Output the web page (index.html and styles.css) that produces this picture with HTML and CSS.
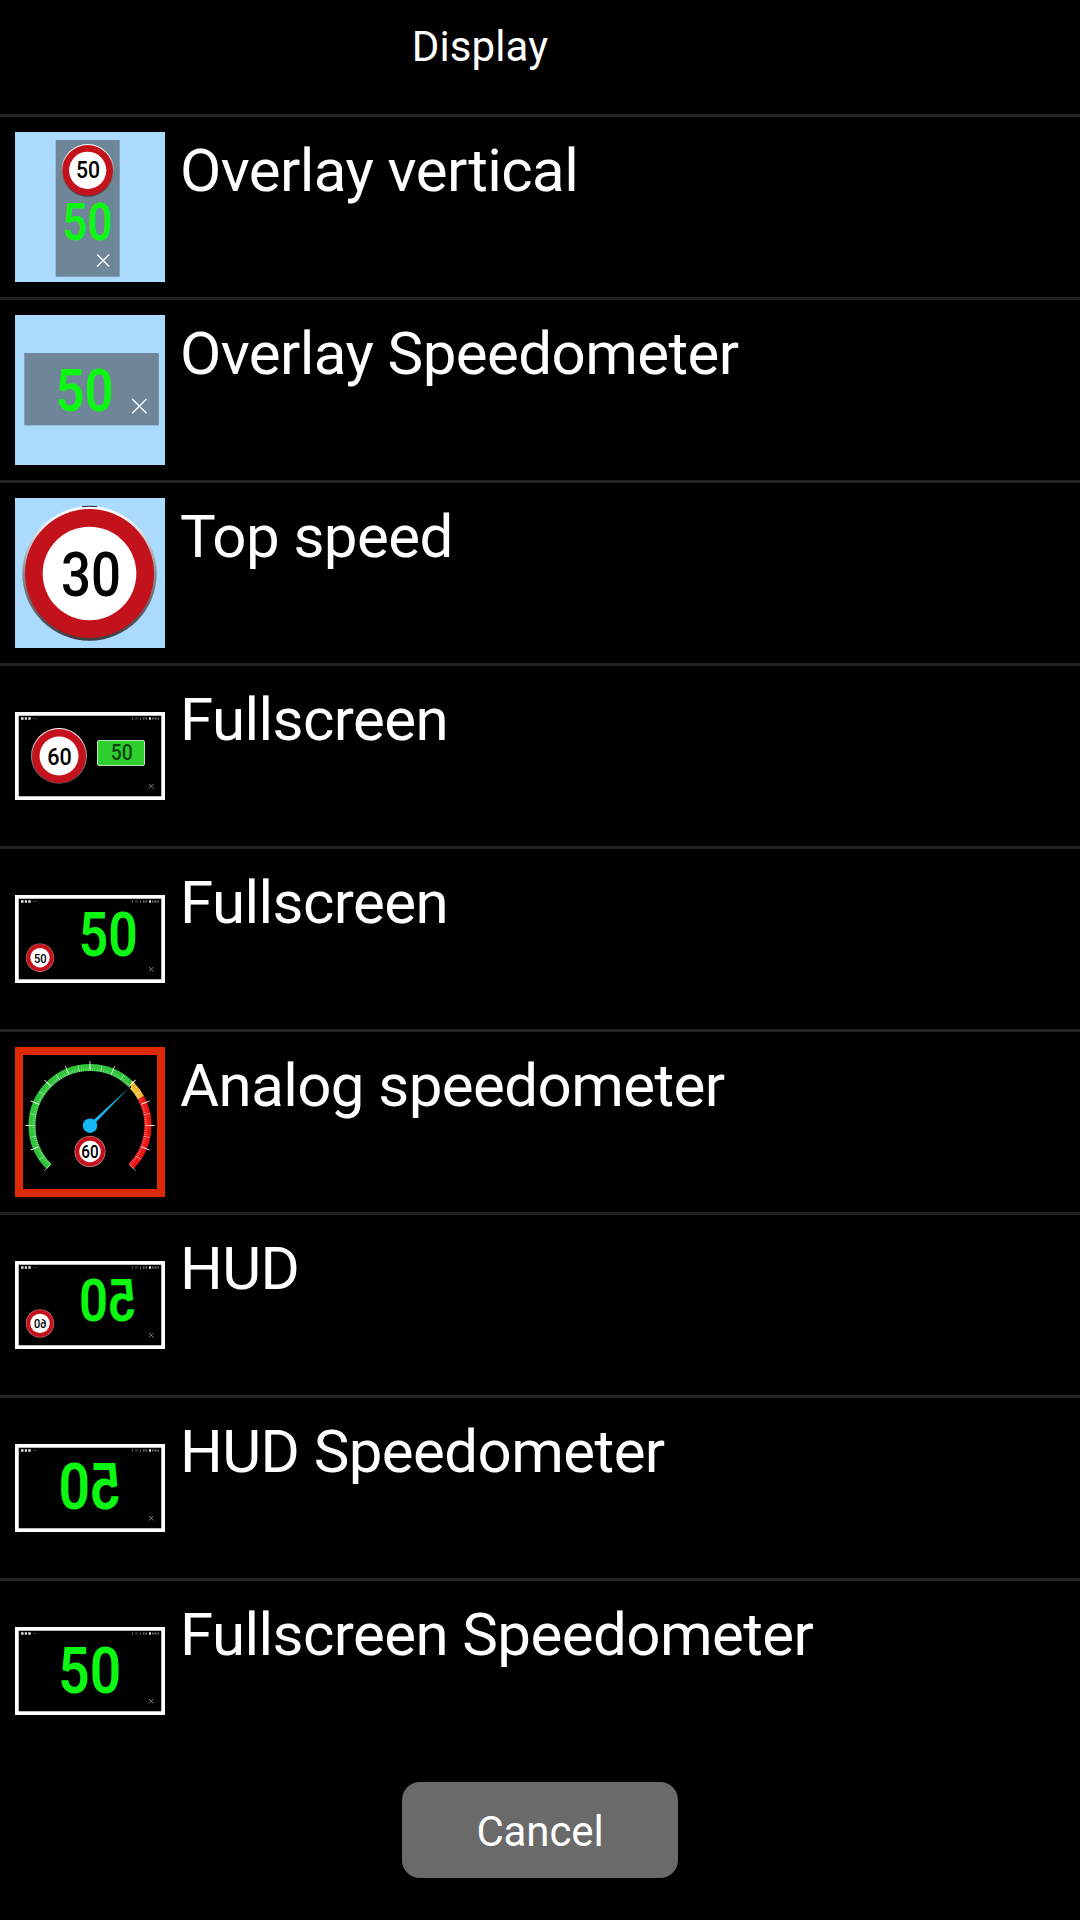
FILE: index.html
```html
<!DOCTYPE html>
<html lang="en">
<head>
    <meta charset="UTF-8">
    <meta name="viewport" content="width=device-width, initial-scale=1.0">
    <title>Display</title>
    <link rel="stylesheet" href="styles.css">
</head>
<body>
    <!-- Shared thumbnail parts -->
    <svg class="defs" width="0" height="0">
        <defs>
            <linearGradient id="rim" x1="0" y1="0" x2="0" y2="1">
                <stop offset="0" stop-color="#ffffff"/>
                <stop offset="0.12" stop-color="#f0f0f0"/>
                <stop offset="0.5" stop-color="#8c8a8c"/>
                <stop offset="1" stop-color="#3c3c40"/>
            </linearGradient>
            <g id="screen">
                <rect width="150" height="88" fill="#fff"/>
                <rect x="3.5" y="3.5" width="143" height="81" fill="#777"/>
                <rect x="4" y="4" width="142" height="80" fill="#000"/>
                <path d="M6 6.500h2.600M9.800 6.500h2.200M13.200 6.500h2.600" stroke="#ddd" stroke-width="2.400"/>
                <path d="M18 6.500h4" stroke="#333" stroke-width="1"/>
                <path d="M117 6.500h1.500M120.500 6.500h2M125 6.800h1.500M128 6.500h4.500M137 6.500h7" stroke="#777" stroke-width="2" stroke-dasharray="1 .5"/>
                <path d="M134 6.500h2" stroke="#ddd" stroke-width="2.600"/>
                <path d="M134 72l4.500 4.500M138.500 72l-4.500 4.500" stroke="#999" stroke-width=".8"/>
            </g>
        </defs>
    </svg>

    <header class="header">Display</header>

    <!-- Display modes -->
    <ul class="list">
        <li class="item">
            <svg class="thumb" viewBox="0 0 150 150">
                <rect class="sky" width="150" height="150"/>
                <rect class="overlay" x="40.700" y="8" width="64" height="136.700"/>
                <circle cx="72.700" cy="38.300" r="26.400" fill="url(#rim)"/>
                <circle class="ring" cx="72.700" cy="38.300" r="25.300"/>
                <circle class="face" cx="72.700" cy="38.300" r="18.600"/>
                <text class="limit" x="73" y="46.300" font-size="23.500" textLength="24" lengthAdjust="spacingAndGlyphs">50</text>
                <text class="speed" x="72.500" y="108.300" font-size="51" textLength="50" lengthAdjust="spacingAndGlyphs">50</text>
                <path class="close" d="M82.200 122.500l12 12M94.200 122.500l-12 12"/>
            </svg>
            <span class="label">Overlay vertical</span>
        </li>
        <li class="item">
            <svg class="thumb" viewBox="0 0 150 150">
                <rect class="sky" width="150" height="150"/>
                <rect class="overlay" x="9.300" y="38" width="134.500" height="72.300"/>
                <text class="speed" x="69.500" y="95.500" font-size="59.500" textLength="58" lengthAdjust="spacingAndGlyphs">50</text>
                <path class="close" d="M117.200 84l14.300 14.300M131.500 84l-14.300 14.300"/>
            </svg>
            <span class="label">Overlay Speedometer</span>
        </li>
        <li class="item">
            <svg class="thumb" viewBox="0 0 150 150">
                <rect class="sky" width="150" height="150"/>
                <circle cx="74.500" cy="75.500" r="67.200" fill="url(#rim)"/>
                <path d="M67 8.700a67 67 0 0 1 15 0" fill="none" stroke="#222" stroke-width="1"/>
                <circle class="ring" cx="74.500" cy="75.500" r="64.500"/>
                <circle class="face" cx="74.500" cy="75.500" r="46.800"/>
                <text class="limit" x="75.900" y="97.600" font-size="61" textLength="60" lengthAdjust="spacingAndGlyphs">30</text>
            </svg>
            <span class="label">Top speed</span>
        </li>
        <li class="item">
            <svg class="thumb wide" viewBox="0 0 150 88">
                <use href="#screen"/>
                <circle cx="44" cy="44" r="28" fill="url(#rim)"/>
                <circle class="ring" cx="44" cy="44" r="27"/>
                <circle class="face" cx="44" cy="44" r="19.500"/>
                <text class="limit" x="44.500" y="52.500" font-size="24.500" textLength="24.500" lengthAdjust="spacingAndGlyphs">60</text>
                <rect x="82.500" y="28.500" width="47" height="25" rx="1.500" fill="#2fce2f" stroke="#b9e8b9"/>
                <text class="limit dark" x="106.800" y="48.300" font-size="22" textLength="22" lengthAdjust="spacingAndGlyphs">50</text>
            </svg>
            <span class="label">Fullscreen</span>
        </li>
        <li class="item">
            <svg class="thumb wide" viewBox="0 0 150 88">
                <use href="#screen"/>
                <circle cx="25" cy="62.700" r="14.200" fill="#b77"/>
                <circle class="ring" cx="25" cy="62.700" r="13.600"/>
                <circle class="face" cx="25" cy="62.700" r="9.700"/>
                <text class="limit" x="25.200" y="67.500" font-size="13.300" textLength="12.600" lengthAdjust="spacingAndGlyphs">50</text>
                <text class="speed" x="93.200" y="61.300" font-size="60.500" textLength="59" lengthAdjust="spacingAndGlyphs">50</text>
            </svg>
            <span class="label">Fullscreen</span>
        </li>
        <li class="item">
            <svg class="thumb" viewBox="0 0 150 150">
                <rect x="4" y="4" width="142" height="142" fill="#000" stroke="#dd2a05" stroke-width="8"/>
                <!-- gauge runs 270 degrees, pathLength matches so dashes are in degrees -->
                <g fill="none">
                    <path d="M33.990 119.510A58 58 0 1 1 116.010 119.510" pathLength="270" stroke="#2fc43a" stroke-width="7" stroke-dasharray="180 270"/>
                    <path d="M33.990 119.510A58 58 0 1 1 116.010 119.510" pathLength="270" stroke="#efb92e" stroke-width="7" stroke-dasharray="0 180 16.500 270"/>
                    <path d="M33.990 119.510A58 58 0 1 1 116.010 119.510" pathLength="270" stroke="#ee1515" stroke-width="7" stroke-dasharray="0 196.500 73.500 0"/>
                    <path d="M35.400 118.100A56 56 0 1 1 114.600 118.100" pathLength="270" stroke="#fff" stroke-opacity=".4" stroke-width="3" stroke-dasharray=".7 1.550"/>
                    <path d="M33.990 119.510A58 58 0 1 1 116.010 119.510" pathLength="270" stroke="#fff" stroke-opacity=".6" stroke-width="6" stroke-dasharray=".7 10.550" stroke-dashoffset=".350"/>
                    <path d="M32.220 121.280A60.500 60.500 0 1 1 117.780 121.280" pathLength="270" stroke="#fff" stroke-width="8" stroke-dasharray=".7 21.800" stroke-dashoffset=".350"/>
                </g>
                <path d="M73.700 77.400L114.500 40.300L76.400 80.100z" fill="#1db4ec"/>
                <circle cx="75" cy="78.700" r="7.200" fill="#14b9fa"/>
                <circle cx="75" cy="104.500" r="15.500" fill="#c99"/>
                <circle class="ring" cx="75" cy="104.500" r="14.900"/>
                <circle class="face" cx="75" cy="104.500" r="10.700"/>
                <text class="limit" x="75" y="111.300" font-size="17.500" textLength="17.300" lengthAdjust="spacingAndGlyphs">60</text>
            </svg>
            <span class="label">Analog speedometer</span>
        </li>
        <li class="item">
            <svg class="thumb wide" viewBox="0 0 150 88">
                <use href="#screen"/>
                <circle cx="25" cy="62.400" r="14.200" fill="#b77"/>
                <circle class="ring" cx="25" cy="62.400" r="13.600"/>
                <circle class="face" cx="25" cy="62.400" r="9.700"/>
                <text class="limit" transform="translate(25.200 67.200) scale(-1 1)" font-size="13.300" textLength="12.600" lengthAdjust="spacingAndGlyphs">60</text>
                <text class="speed" transform="translate(93 60) scale(-1 1)" font-size="59.500" textLength="58" lengthAdjust="spacingAndGlyphs">50</text>
            </svg>
            <span class="label">HUD</span>
        </li>
        <li class="item">
            <svg class="thumb wide" viewBox="0 0 150 88">
                <use href="#screen"/>
                <text class="speed" transform="translate(75 65) scale(-1 1)" font-size="65" textLength="63" lengthAdjust="spacingAndGlyphs">50</text>
            </svg>
            <span class="label">HUD Speedometer</span>
        </li>
        <li class="item">
            <svg class="thumb wide" viewBox="0 0 150 88">
                <use href="#screen"/>
                <text class="speed" x="74.800" y="66" font-size="65" textLength="63" lengthAdjust="spacingAndGlyphs">50</text>
            </svg>
            <span class="label">Fullscreen Speedometer</span>
        </li>
    </ul>

    <footer class="footer">
        <button class="cancel" type="button">Cancel</button>
    </footer>
</body>
</html>
```

FILE: styles.css
```css
* {
    box-sizing: border-box;
}

body {
    margin: 0;
    height: 1920px;
    display: flex;
    flex-direction: column;
    background: #000;
    color: #fff;
    font-family: Roboto, sans-serif;
    overflow: hidden;
}

.defs {
    display: block;
    flex: none;
}

.header {
    height: 114px;
    padding: 22px 120px 0 0;
    font-size: 42px;
    line-height: 49px;
    letter-spacing: 0.1px;
    text-align: center;
}

/* List of modes */
.list {
    list-style: none;
    margin: 0;
    padding: 0;
}

.item {
    display: flex;
    gap: 15px;
    height: 183px;
    padding: 15px;
    border-top: 3px solid #212121;
}

.thumb {
    display: block;
    flex: none;
    width: 150px;
    height: 150px;
}

.thumb.wide {
    height: 88px;
    align-self: center;
}

.label {
    padding-top: 4px;
    font-size: 60px;
    line-height: 70px;
    letter-spacing: -0.57px;
    white-space: nowrap;
}

/* Thumbnail drawing */
.sky {
    fill: #abdaff;
}

.overlay {
    fill: #6f8699;
}

.ring {
    fill: #c3121c;
}

.face {
    fill: #fff;
}

.limit,
.speed {
    font-family: Roboto, sans-serif;
    text-anchor: middle;
}

.limit {
    fill: #000;
    font-weight: 500;
}

.limit.dark {
    fill: #0a450c;
}

.speed {
    fill: #0cf711;
    font-weight: 600;
}

.close {
    fill: none;
    stroke: #fff;
    stroke-width: 1.3;
}

/* Bottom button */
.footer {
    display: flex;
    justify-content: center;
    padding-top: 21px;
}

.cancel {
    width: 276px;
    height: 96px;
    padding: 2px 0 0;
    border: none;
    border-radius: 18px;
    background: #6a6a6a;
    color: #fff;
    font-family: Roboto, sans-serif;
    font-size: 42px;
    letter-spacing: -0.1px;
}
```
